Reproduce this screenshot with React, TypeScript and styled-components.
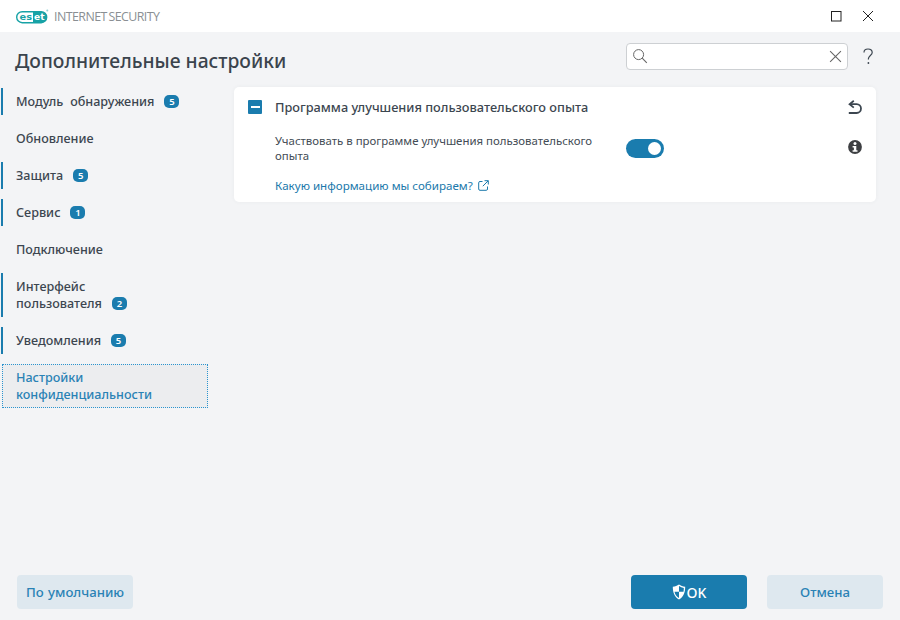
import { ReactNode } from "react";
import styled, { createGlobalStyle } from "styled-components";

const GlobalStyle = createGlobalStyle`
  html, body {
    margin: 0;
    padding: 0;
    background: #f3f4f6;
  }
  * {
    box-sizing: border-box;
  }
`;

const Page = styled.div`
  width: 900px;
  height: 620px;
  display: flex;
  flex-direction: column;
  overflow: hidden;
  background: #f3f4f6;
  color: #3c4650;
  font-family: "Noto Sans", "Open Sans", sans-serif;
`;

const TitleBar = styled.header`
  height: 32px;
  flex: none;
  display: flex;
  align-items: center;
  justify-content: space-between;
  padding: 0 26px 0 16px;
  background: #ffffff;
`;

const Brand = styled.div`
  display: flex;
  align-items: center;
  gap: 5px;
`;

const ProductName = styled.span`
  font-family: "Open Sans", sans-serif;
  font-size: 12.4px;
  letter-spacing: -0.55px;
  word-spacing: -1px;
  color: #8a8f93;
`;

const WindowButtons = styled.div`
  display: flex;
  align-items: center;
  gap: 20px;
`;

const HeadRow = styled.div`
  height: 55px;
  flex: none;
  display: flex;
  align-items: center;
  justify-content: space-between;
  padding: 1px 26px 0 15px;
`;

const Title = styled.h1`
  margin: 0;
  font-size: 19.3px;
  font-weight: 500;
  color: #3b444d;
`;

const SearchArea = styled.div`
  display: flex;
  align-items: center;
  gap: 15px;
  padding-bottom: 8px;
`;

const SearchBox = styled.div`
  width: 222px;
  height: 27px;
  display: flex;
  align-items: center;
  justify-content: space-between;
  padding: 0 5px;
  background: #ffffff;
  border: 1px solid #cdd0d3;
  border-radius: 4px;
`;

const Main = styled.main`
  flex: 1;
  display: flex;
  min-height: 0;
`;

const Sidebar = styled.nav`
  width: 207px;
  flex: none;
  margin-left: 1px;
  padding-top: 1px;
  display: flex;
  flex-direction: column;
  gap: 10px;
`;

const NavItem = styled.div<{ $marked?: boolean; $active?: boolean }>`
  padding: 5px 13px;
  border-left: 2px solid ${(p) => (p.$marked ? "#1a7cae" : "transparent")};
  font-size: 12.6px;
  font-weight: 500;
  word-spacing: 3.5px;
  line-height: 17px;
  color: ${(p) => (p.$active ? "#2a82b5" : "#3c4650")};
  ${(p) =>
    p.$active &&
    `
    margin-left: 1px;
    padding: 4px 13px;
    border: 1px dotted #2b94cf;
    background: #ecedef;
  `}
`;

const Badge = styled.span`
  display: inline-flex;
  align-items: center;
  justify-content: center;
  width: 15px;
  height: 13px;
  margin-left: 10px;
  border-radius: 5px;
  background: #1a7cae;
  color: #ffffff;
  font-size: 9.5px;
  font-weight: 600;
  line-height: 13px;
  vertical-align: 1px;
`;

const Content = styled.section`
  flex: 1;
  padding: 0 24px 0 26px;
`;

const Card = styled.div`
  height: 115px;
  padding: 0 14px;
  background: #ffffff;
  border-radius: 5px;
  box-shadow: 0 0 4px rgba(60, 70, 80, 0.05);
`;

const CardHead = styled.div`
  height: 40px;
  display: flex;
  align-items: center;
  gap: 13px;
`;

const Collapse = styled.span`
  width: 14px;
  height: 14px;
  flex: none;
  display: flex;
  align-items: center;
  justify-content: center;
  background: #1a7cae;
  border-radius: 1px;
  &::before {
    content: "";
    width: 9px;
    height: 2px;
    background: #ffffff;
  }
`;

const CardTitle = styled.h2`
  flex: 1;
  margin: 0;
  font-size: 12.75px;
  font-weight: 500;
  color: #3c4650;
`;

const SettingRow = styled.div`
  display: grid;
  grid-template-columns: 351px 1fr 14px;
  align-items: center;
  padding-left: 27px;
  margin-top: 6px;
`;

const SettingLabel = styled.div`
  font-size: 11.43px;
  line-height: 15px;
  color: #434c55;
`;

const Toggle = styled.span`
  width: 38px;
  height: 19px;
  display: flex;
  align-items: center;
  justify-content: flex-end;
  padding-right: 2px;
  border-radius: 10px;
  background: #1a7cae;
  &::after {
    content: "";
    width: 13px;
    height: 13px;
    margin-right: 1px;
    border-radius: 50%;
    background: #ffffff;
  }
`;

const InfoSlot = styled.span`
  display: flex;
  margin-bottom: 2px;
`;

const InfoLink = styled.a`
  display: flex;
  align-items: center;
  gap: 5px;
  margin: 15px 0 0 27px;
  font-size: 11.6px;
  line-height: 15px;
  color: #1b79ab;
`;

const Footer = styled.footer`
  height: 45px;
  margin-bottom: 11px;
  padding: 0 17px;
  flex: none;
  display: flex;
  align-items: flex-end;
  gap: 20px;
`;

const Button = styled.div<{ $primary?: boolean }>`
  width: 116px;
  height: 34px;
  display: flex;
  align-items: center;
  justify-content: center;
  gap: 1px;
  border-radius: 4px;
  background: ${(p) => (p.$primary ? "#1a7cae" : "#dee8ef")};
  color: ${(p) => (p.$primary ? "#ffffff" : "#2a82b5")};
  font-size: ${(p) => (p.$primary ? "14px" : "13.2px")};
  font-weight: 500;
  word-spacing: 1px;
`;

const Spacer = styled.div`
  flex: 1;
`;

function EsetLogo() {
  return (
    <svg width="33" height="15" viewBox="0 0 33 15">
      <rect x="0.7" y="2.7" width="30" height="11" rx="5.5" fill="none" stroke="#17a2a6" strokeWidth="1.4" />
      <path d="M17 2.7h8.200a5.500 5.500 0 0 1 0 11H17z" fill="#17a2a6" />
      <text x="3.500" y="11.300" fontFamily="DejaVu Sans" fontSize="8" fontWeight="700" fill="#17a2a6" textLength="12.500" lengthAdjust="spacingAndGlyphs">es</text>
      <text x="18" y="11.300" fontFamily="DejaVu Sans" fontSize="8" fontWeight="700" fill="#ffffff" textLength="10.500" lengthAdjust="spacingAndGlyphs">et</text>
      <circle cx="31.300" cy="1.500" r="1" fill="#8fd0d2" />
    </svg>
  );
}

function MaximizeIcon() {
  return (
    <svg width="11" height="11" viewBox="0 0 11 11">
      <rect x="0.5" y="0.5" width="9.5" height="9.5" fill="none" stroke="#222" strokeWidth="1" />
    </svg>
  );
}

function CloseIcon({ size, color }: { size: number; color: string }) {
  return (
    <svg width={size} height={size} viewBox="0 0 12 12">
      <path d="M1 1l10 10M11 1L1 11" fill="none" stroke={color} strokeWidth="1" />
    </svg>
  );
}

function SearchIcon() {
  return (
    <svg width="16" height="16" viewBox="0 0 16 16">
      <circle cx="6.600" cy="6.600" r="5" fill="none" stroke="#666" strokeWidth="1" />
      <path d="M10.200 10.200l4.600 4.600" fill="none" stroke="#666" strokeWidth="1.100" />
    </svg>
  );
}

function HelpIcon() {
  return (
    <svg width="11" height="17" viewBox="0 0 11 17">
      <path d="M1 4.400C1 2.300 2.800 1 5 1s4.200 1.200 4.200 3.400c0 3-3.800 3.100-3.800 6.400v.8" fill="none" stroke="#3c4650" strokeWidth="1.200" />
      <circle cx="5.400" cy="15" r="0.9" fill="#3c4650" />
    </svg>
  );
}

function RevertIcon() {
  return (
    <svg width="14" height="15" viewBox="0 0 14 15">
      <path d="M5.800.8L1.600 4.200l4.200 3.400" fill="none" stroke="#3c4650" strokeWidth="1.800" />
      <path d="M2 4.200h6.600a4.400 4.400 0 0 1 0 8.800H.8" fill="none" stroke="#3c4650" strokeWidth="1.800" />
    </svg>
  );
}

function InfoIcon() {
  return (
    <svg width="14" height="14" viewBox="0 0 14 14">
      <circle cx="7" cy="7" r="6.900" fill="#3d3f42" />
      <circle cx="7" cy="3.500" r="1.500" fill="#fff" />
      <path d="M4.600 5.900h3.700v4.300h1.200v1.500H4.600v-1.500h1.300V7.400H4.600z" fill="#fff" />
    </svg>
  );
}

function ExternalIcon() {
  return (
    <svg width="11" height="11" viewBox="0 0 11 11">
      <path d="M4.500 1.500H2A1.300 1.300 0 0 0 .7 2.800V9A1.300 1.300 0 0 0 2 10.300h6.200A1.300 1.300 0 0 0 9.500 9V6.500" fill="none" stroke="#1b79ab" strokeWidth="1" />
      <path d="M6.500.7h3.800v3.800M10.200.8L4.800 6.200" fill="none" stroke="#1b79ab" strokeWidth="1" />
    </svg>
  );
}

function ShieldIcon() {
  return (
    <svg width="14" height="16" viewBox="0 0 14 16">
      <path d="M7 .5c1.800 1.300 3.800 2 6.200 2.200 0 5.600-1.600 10-6.200 12.800C2.400 12.700.8 8.300.8 2.700 3.200 2.500 5.200 1.800 7 .5z" fill="#fff" />
      <path d="M7 2v5.800H2.500c.3 2.600 2 4.800 4.500 6.300V7.800h4.500c.2-1.300.3-2.600.3-3.900C10 3.600 8.400 3 7 2z" fill="#1a7cae" />
    </svg>
  );
}

interface SectionLinkProps {
  children: ReactNode;
  count?: number;
  active?: boolean;
}

function SectionLink({ children, count, active }: SectionLinkProps) {
  return (
    <NavItem $marked={count !== undefined} $active={active}>
      {children}
      {count !== undefined && <Badge>{count}</Badge>}
    </NavItem>
  );
}

export default function App() {
  return (
    <Page>
      <GlobalStyle />
      <TitleBar>
        <Brand>
          <EsetLogo />
          <ProductName>INTERNET SECURITY</ProductName>
        </Brand>
        <WindowButtons>
          <MaximizeIcon />
          <CloseIcon size={12} color="#222" />
        </WindowButtons>
      </TitleBar>
      <HeadRow>
        <Title>Дополнительные настройки</Title>
        <SearchArea>
          <SearchBox>
            <SearchIcon />
            <CloseIcon size={13} color="#666" />
          </SearchBox>
          <HelpIcon />
        </SearchArea>
      </HeadRow>
      <Main>
        <Sidebar>
          <SectionLink count={5}>Модуль обнаружения</SectionLink>
          <SectionLink>Обновление</SectionLink>
          <SectionLink count={5}>Защита</SectionLink>
          <SectionLink count={1}>Сервис</SectionLink>
          <SectionLink>Подключение</SectionLink>
          <SectionLink count={2}>
            Интерфейс
            <br />
            пользователя
          </SectionLink>
          <SectionLink count={5}>Уведомления</SectionLink>
          <SectionLink active>
            Настройки
            <br />
            конфиденциальности
          </SectionLink>
        </Sidebar>
        <Content>
          <Card>
            <CardHead>
              <Collapse />
              <CardTitle>Программа улучшения пользовательского опыта</CardTitle>
              <RevertIcon />
            </CardHead>
            <SettingRow>
              <SettingLabel>
                Участвовать в программе улучшения пользовательского
                <br />
                опыта
              </SettingLabel>
              <Toggle />
              <InfoSlot>
                <InfoIcon />
              </InfoSlot>
            </SettingRow>
            <InfoLink>
              Какую информацию мы собираем?
              <ExternalIcon />
            </InfoLink>
          </Card>
        </Content>
      </Main>
      <Footer>
        <Button>По умолчанию</Button>
        <Spacer />
        <Button $primary>
          <ShieldIcon />
          OK
        </Button>
        <Button>Отмена</Button>
      </Footer>
    </Page>
  );
}
